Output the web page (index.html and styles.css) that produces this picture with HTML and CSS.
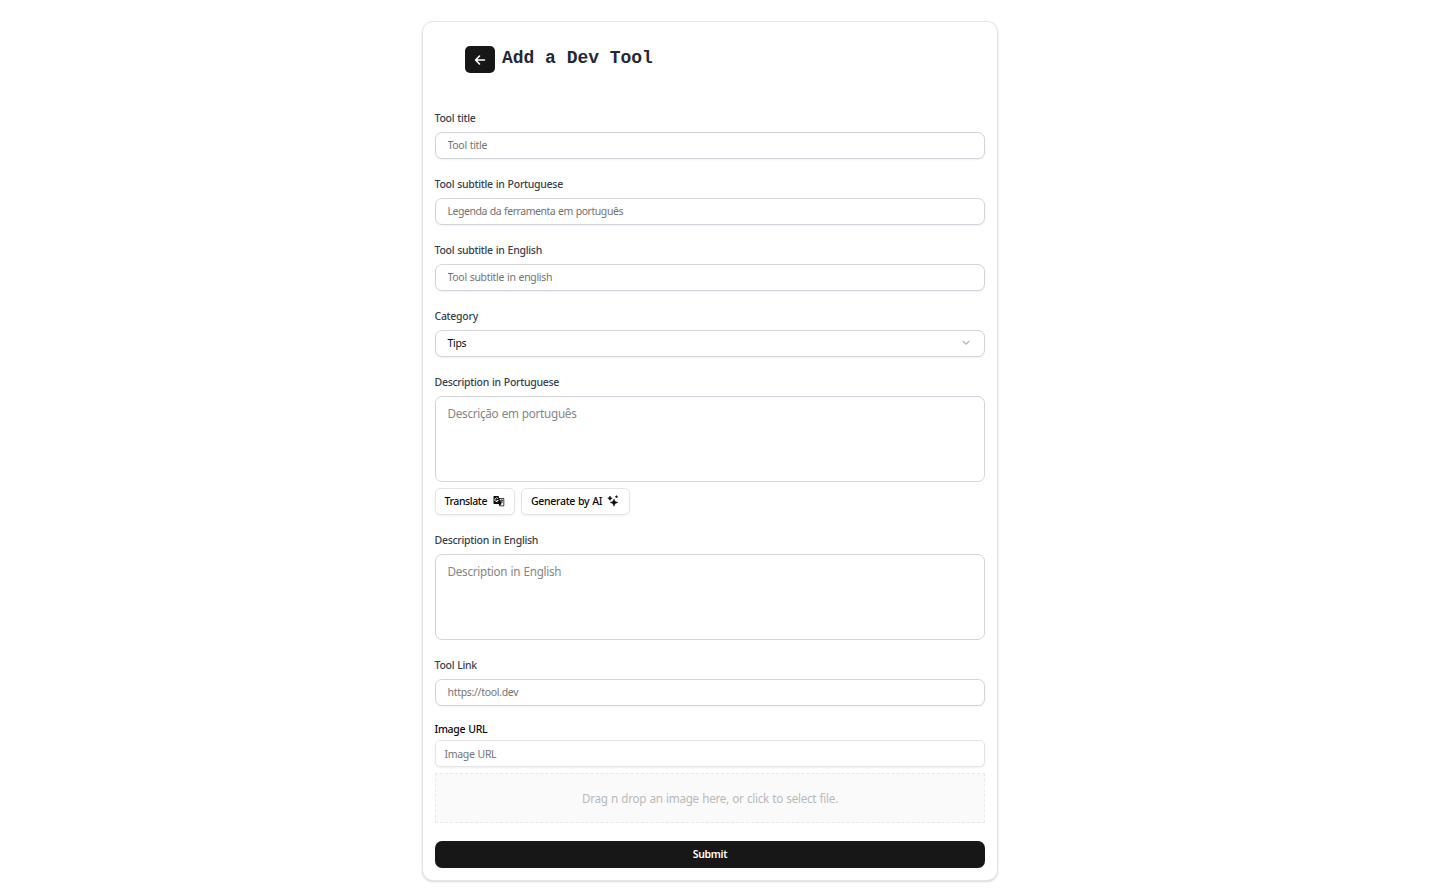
FILE: index.html
```html
<!DOCTYPE html>
<html lang="en">
<head>
<meta charset="utf-8">
<title>Add a Dev Tool</title>
<link rel="stylesheet" href="styles.css">
</head>
<body>
<main class="card">
  <header class="header">
    <button class="back" type="button" aria-label="Back"><svg width="12" height="12" viewBox="0 0 12 12" fill="none" stroke="currentColor" stroke-width="1.6" stroke-linecap="round" stroke-linejoin="round"><path d="M10.500 6H1.800M5.500 2L1.600 6l3.900 4"/></svg></button>
    <h1 class="title">Add a Dev Tool</h1>
  </header>
  <form class="form">
    <div class="field"><label class="label" for="t">Tool title</label><input class="input" id="t" placeholder="Tool title"></div>
    <div class="field"><label class="label" for="sp">Tool subtitle in Portuguese</label><input class="input tight" id="sp" placeholder="Legenda da ferramenta em português"></div>
    <div class="field"><label class="label" for="se">Tool subtitle in English</label><input class="input" id="se" placeholder="Tool subtitle in english"></div>
    <div class="field"><span class="label">Category</span>
      <button class="input select" type="button"><span>Tips</span><svg width="8" height="6" viewBox="0 0 8 6" fill="none" stroke="currentColor" stroke-width="1.1"><path d="M.8 1L4 4.200 7.200 1"/></svg></button></div>
    <div class="field"><label class="label" for="dp">Description in Portuguese</label><textarea class="input area" id="dp" placeholder="Descrição em português"></textarea>
      <div class="actions">
        <button class="action translate" type="button"><span>Translate</span><svg width="12" height="12" viewBox="0 0 24 24"><path fill="currentColor" d="M2 2h9l1.200 4H21a1.500 1.500 0 0 1 1.500 1.500V21a1.500 1.500 0 0 1-1.500 1.500h-8L11.800 18H2.500A1.500 1.500 0 0 1 1 16.500V3.500A1.500 1.500 0 0 1 2 2z"/><path fill="#fff" d="M12.700 7.500H21V21h-7l3-3-1.200-4z"/><path fill="none" stroke="#fff" stroke-width="1.800" d="M10 7.200A3.600 3.600 0 1 0 10.500 11H7"/><path fill="none" stroke="currentColor" stroke-width="1.600" d="M14 10.500h6.500M17 9v1.500M19 11c-.5 2.500-2 4-4 5.500M15.500 12.500l4 4"/></svg></button>
        <button class="action generate" type="button"><span>Generate by AI</span><svg width="12" height="12" viewBox="0 0 24 24" fill="currentColor" stroke="currentColor" stroke-width="1" stroke-linejoin="round"><path d="M14 8l2.200 5 5.300 2-5.300 2.200L14 22.500l-2.200-5.300L6.500 15l5.300-2zM6 2l1.500 3L10.500 6.500 7.500 8 6 11 4.500 8 1.500 6.500l3-1.500zM19 1l.9 1.600 1.600.9-1.600.9L19 6l-.9-1.600-1.600-.9 1.600-.9z"/></svg></button>
      </div></div>
    <div class="field"><label class="label" for="de">Description in English</label><textarea class="input area" id="de" placeholder="Description in English"></textarea></div>
    <div class="field"><label class="label" for="l">Tool Link</label><input class="input" id="l" placeholder="https://tool.dev"></div>
    <div class="field image"><label class="label" for="i">Image URL</label><input class="input url" id="i" placeholder="Image URL">
      <div class="drop"><span>Drag n drop an image here, or click to select file.</span></div></div>
    <button class="submit" type="button">Submit</button>
  </form>
</main>
</body>
</html>
```
FILE: styles.css
```css
* { box-sizing: border-box; }
body { margin: 0; min-height: 100vh; padding: 21px 0 0 422px; background: #fff; font-family: "Noto Sans", "Open Sans", sans-serif; font-size: 10.5px; letter-spacing: -0.31px; word-spacing: 0.5px; color: #0a0a0a; }
button, input, textarea { font: inherit; letter-spacing: inherit; word-spacing: inherit; color: inherit; margin: 0; }
.card { width: 576px; padding: 24px 12px 12px; border: 1px solid #e5e5e5; border-radius: 11px; box-shadow: 0 1px 2px rgba(0,0,0,.16); background: #fff; }
.header { display: flex; align-items: flex-start; gap: 7px; height: 65px; padding-left: 30px; }
.back { display: flex; align-items: center; justify-content: center; width: 30px; height: 27px; padding: 1px 0 0; border: 0; border-radius: 5px; background: #171717; color: #fff; }
.title { margin: 0; font: bold 18px/24px "Liberation Mono", monospace; letter-spacing: -0.03px; word-spacing: 0; color: #1f2937; }
.form { display: flex; flex-direction: column; gap: 18px; }
.field { display: flex; flex-direction: column; }
.label { height: 14px; margin: 0 0 7px -0.5px; line-height: 14px; font-weight: 500; color: #374151; letter-spacing: -0.28px; white-space: nowrap; }
.input { display: block; width: 100%; height: 27px; padding: 0 11.5px 1px; border: 1px solid #d1d5db; border-radius: 7px; background: #fff; outline: 0; box-shadow: 0 1px 2px rgba(0,0,0,.06); }
.input::placeholder { color: #737373; opacity: 1; }
.tight { letter-spacing: -0.45px; }
.select { display: flex; align-items: center; justify-content: space-between; padding-right: 14px; }
.select svg { color: #b0b0b0; }
.area { height: 86px; padding: 8px 11.5px; font-size: 11.7px; line-height: 16px; letter-spacing: -0.28px; resize: none; box-shadow: none; }
.area::placeholder { color: #858585; }
.actions { display: flex; gap: 6px; margin-top: 6px; }
.action { display: flex; align-items: center; justify-content: space-between; height: 27px; padding: 0 9px 1px; border: 1px solid #e5e5e5; border-radius: 5px; background: #fff; box-shadow: 0 1px 2px rgba(0,0,0,.06); font-weight: 500; white-space: nowrap; }
.translate { width: 80px; padding-left: 8.5px; letter-spacing: -0.4px; }
.generate { width: 109px; padding-right: 10px; }
.image { margin-top: -2px; }
.image .label { margin-bottom: 4px; color: #0a0a0a; }
.url { padding: 1px 8.5px 0; border-color: #e5e5e5; border-radius: 5px; }
.drop { display: flex; align-items: center; justify-content: center; height: 50px; margin-top: 6px; border: 1px dashed #e9e9e9; background: #fafafa; color: #b9b9b9; font-size: 11.7px; letter-spacing: -0.27px; }
.submit { height: 27px; padding: 0 0 1px; border: 0; border-radius: 7px; background: #171717; color: #fff; font-weight: 600; }
```
